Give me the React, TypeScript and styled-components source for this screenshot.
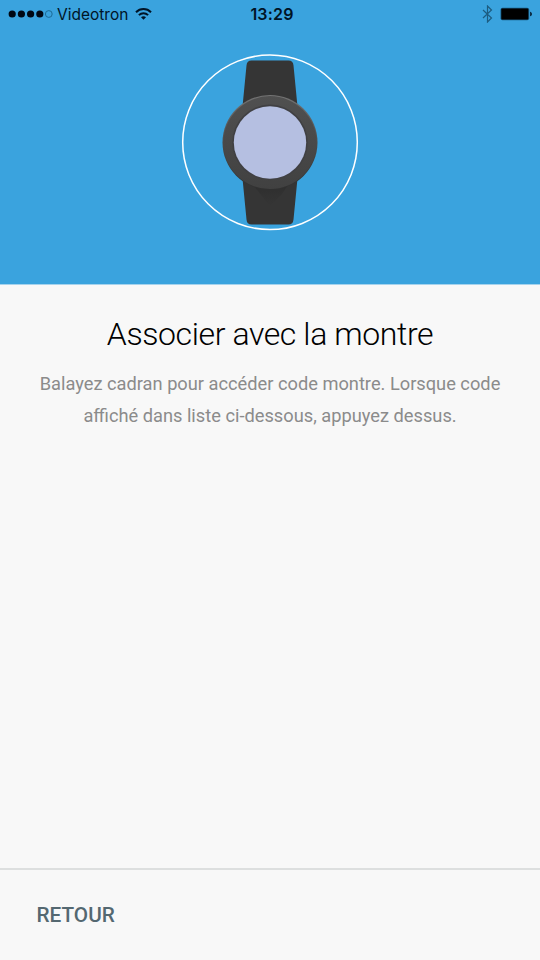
import React from "react";
import styled, { createGlobalStyle } from "styled-components";

const GlobalStyle = createGlobalStyle`
  * { box-sizing: border-box; }
  body { margin: 0; background: #f8f8f8; }
`;

const Screen = styled.main`
  display: flex;
  flex-direction: column;
  width: 100%;
  max-width: 540px;
  height: 960px;
  overflow: hidden;
  background: #f8f8f8;
  font-family: Roboto, "Liberation Sans", sans-serif;
`;

const Hero = styled.header`
  display: flex;
  flex-direction: column;
  align-items: center;
  flex: 0 0 285px;
  border-bottom: 1px solid #a6d3ed;
  background: #3aa3de;
`;

const StatusBar = styled.div`
  display: grid;
  grid-template-columns: 1fr auto 1fr;
  align-items: center;
  width: 100%;
  height: 28px;
  padding: 0 7px 0 8px;
  color: #001426;
  font-family: Inter, "Liberation Sans", sans-serif;
`;

const StatusGroup = styled.div<{ $end?: boolean }>`
  display: flex;
  align-items: center;
  justify-content: ${(p) => (p.$end ? "flex-end" : "flex-start")};
  gap: ${(p) => (p.$end ? "7px" : "0")};
`;

const Carrier = styled.span`
  margin: 0 7px 0 4px;
  padding-top: 1px;
  font-size: 15.5px;
  line-height: 27px;
`;

const Clock = styled.time`
  padding-left: 3px;
  font-size: 16px;
  font-weight: 600;
  line-height: 28px;
  letter-spacing: 0.2px;
`;

const Illustration = styled.svg`
  display: block;
  width: 180px;
  height: 180px;
  margin-top: 24px;
`;

const Content = styled.section`
  flex: 1;
  padding: 27px 30px 0;
  text-align: center;
`;

const Title = styled.h1`
  margin: 0;
  color: #000;
  font-size: 32px;
  font-weight: 300;
  line-height: 44px;
  letter-spacing: -0.4px;
`;

const Description = styled.p`
  margin: 12px 0 0;
  color: #8b8b8b;
  font-size: 18.25px;
  line-height: 32px;
`;

const Footer = styled.footer`
  display: flex;
  align-items: center;
  flex: 0 0 92px;
  padding: 0 36.5px;
  border-top: 2px solid #dddfdf;
`;

const BackButton = styled.button`
  padding: 0;
  border: 0;
  background: none;
  color: #546871;
  font-family: inherit;
  font-size: 20.75px;
  font-weight: 500;
  line-height: 28px;
  cursor: pointer;
`;

const SignalDots = () => (
  <svg width="45" height="10" viewBox="0 0 45 10" aria-hidden="true">
    {[4.2, 13.4, 22.6, 31.8].map((x) => (
      <circle key={x} cx={x} cy="5" r="3.6" fill="#000814" />
    ))}
    <circle cx="40.8" cy="5" r="3.4" fill="none" stroke="#18658f" strokeWidth="0.9" />
  </svg>
);

const WifiIcon = () => (
  <svg width="17" height="14" viewBox="0 0 17 14" fill="none" stroke="#001426" strokeWidth="2" aria-hidden="true">
    <path d="M1 5.2C5.200 1 11.800 1 16 5.200" />
    <path d="M3.900 8.100c2.600-2.600 6.600-2.600 9.200 0" />
    <path d="M8.500 12.800 6 10.200c1.400-1.300 3.600-1.300 5 0z" fill="#001426" stroke="none" />
  </svg>
);

const BluetoothIcon = () => (
  <svg width="11" height="18" viewBox="0 0 11 18" fill="none" stroke="#1c5c80" strokeWidth="1.2" aria-hidden="true">
    <path d="M1 5 9.500 13 5.500 17V1l4 4L1 13" />
  </svg>
);

const BatteryIcon = () => (
  <svg width="33" height="14" viewBox="0 0 33 14" aria-hidden="true">
    <rect x="0.5" y="0.8" width="28.7" height="12.4" rx="2" fill="#16577f" />
    <rect x="1.3" y="1.6" width="27" height="10.8" rx="1" fill="#000" />
    <path d="M30.2 4.7c2.2.7 2.2 3.9 0 4.6z" fill="#001426" />
  </svg>
);

const Watch = () => (
  <Illustration viewBox="0 0 180 180" role="img" aria-label="Montre">
    <defs>
      <linearGradient id="bezel" x1="0" y1="0" x2="0" y2="1">
        <stop offset="0" stopColor="#505050" />
        <stop offset="1" stopColor="#414141" />
      </linearGradient>
      <linearGradient id="rim" x1="0" y1="0" x2="0" y2="1">
        <stop offset="0" stopColor="#747474" />
        <stop offset="0.5" stopColor="#4b4b4b" />
        <stop offset="1" stopColor="#303030" />
      </linearGradient>
      <linearGradient id="shadow" x1="0" y1="0" x2="0" y2="1">
        <stop offset="0.3" stopColor="#292929" />
        <stop offset="1" stopColor="#353535" />
      </linearGradient>
    </defs>
    <path
      d="M71.500 8.400h37q4.600 0 5 5l3.700 38v78l-3.700 38q-.4 5-5 5h-37q-4.600 0-5-5l-3.700-38v-78l3.700-38q.4-5 5-5z"
      fill="#353535"
    />
    <path d="M68 127h44l-10 15-12 12z" fill="url(#shadow)" opacity=".5" />
    <circle cx="90" cy="90.400" r="47.500" fill="url(#rim)" />
    <circle cx="90" cy="90.600" r="46.500" fill="url(#bezel)" />
    <circle cx="90" cy="90.400" r="37.800" fill="#404043" />
    <circle cx="90" cy="90.500" r="36.200" fill="#b5bfe1" />
    <circle cx="90" cy="90.300" r="87.300" fill="none" stroke="#fff" strokeWidth="1.500" />
  </Illustration>
);

export default function App() {
  return (
    <>
      <GlobalStyle />
      <Screen>
        <Hero>
          <StatusBar>
            <StatusGroup>
              <SignalDots />
              <Carrier>Videotron</Carrier>
              <WifiIcon />
            </StatusGroup>
            <Clock>13:29</Clock>
            <StatusGroup $end>
              <BluetoothIcon />
              <BatteryIcon />
            </StatusGroup>
          </StatusBar>
          <Watch />
        </Hero>
        <Content>
          <Title>Associer avec la montre</Title>
          <Description>
            Balayez cadran pour accéder code montre. Lorsque code affiché dans liste ci-dessous, appuyez dessus.
          </Description>
        </Content>
        <Footer>
          <BackButton>RETOUR</BackButton>
        </Footer>
      </Screen>
    </>
  );
}
